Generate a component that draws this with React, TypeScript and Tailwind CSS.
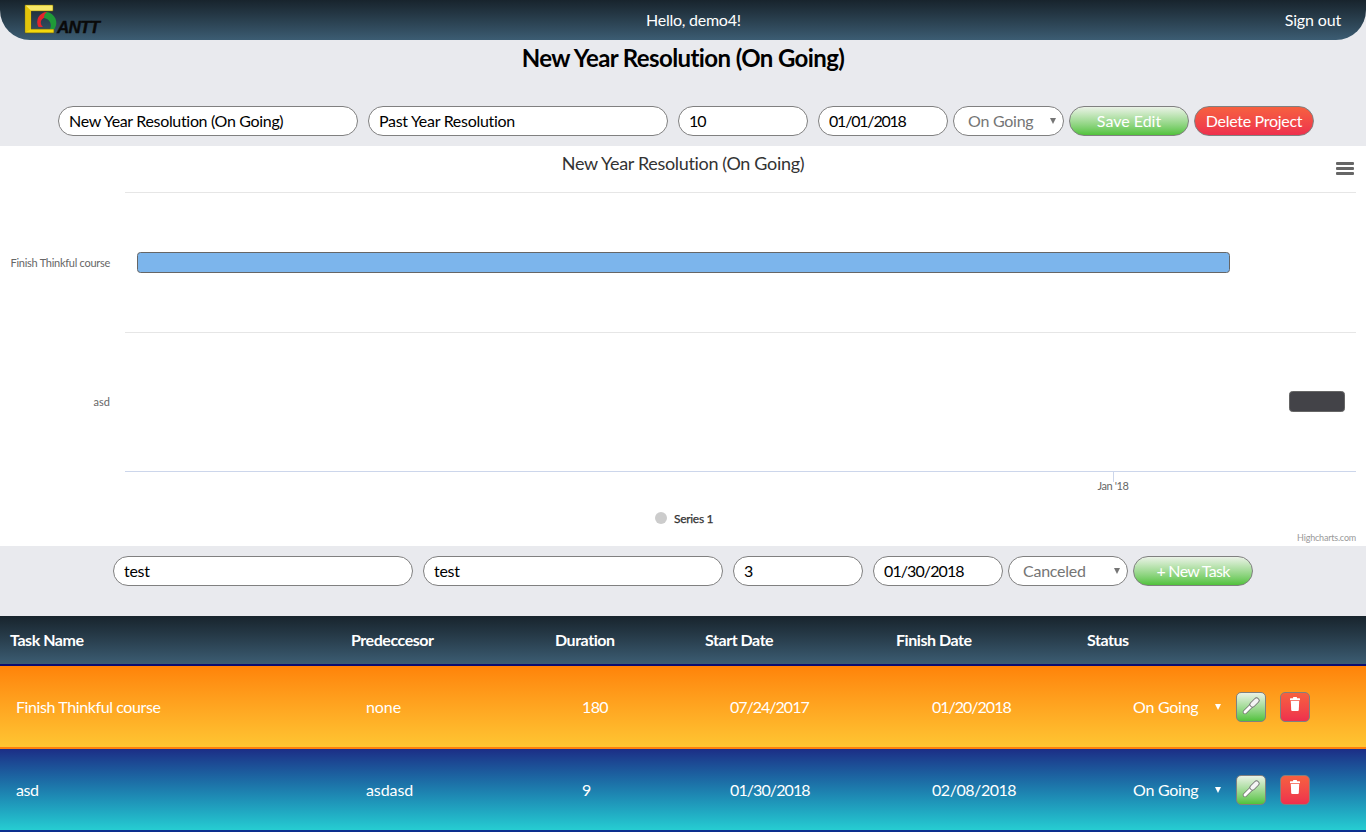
import React from "react";

const font = "font-['Lato','Open_Sans',sans-serif]";
const inputCls = `h-[30px] rounded-[15px] border border-[#808080] bg-white px-[10px] pb-[2px] text-[16px] text-black outline-none ${font}`;
const selectCls = `h-[30px] w-full appearance-none rounded-[15px] border border-[#808080] bg-white pl-[14px] text-[16px] tracking-[-0.25px] text-[#757575] outline-none ${font}`;
const greenBtn = `h-[30px] w-[120px] rounded-[15px] border border-[#808080] bg-gradient-to-b from-[#eaf2e6] to-[#50c23a] text-[16px] text-white ${font}`;
const redBtn = `h-[30px] w-[120px] rounded-[15px] border border-[#808080] bg-gradient-to-b from-[#f6603f] to-[#ee2f4d] text-[16px] text-white ${font}`;

function Logo() {
  return (
    <svg width="78" height="32" viewBox="0 0 78 32" className="block">
      <polygon points="1,1 29,1 29,7 7,7 7,25 30,25 30,29 1,29" fill="#f3d80c" stroke="#5d5a20" strokeWidth="0.7" />
      <polygon points="1.5,1.5 28.5,1.5 28.5,6.5 7,6.5" fill="#f7e96a" />
      <polygon points="1.5,1.5 7,7 7,25 1.5,28.5" fill="#e3c40a" />
      <path d="M23 8 A10 10 0 0 0 14.5 23 L19 23 A6 6 0 0 1 17 17 A5 5 0 0 1 24 14 L23 11 Z" fill="#e4252b" />
      <path d="M23 8 A11 11 0 0 1 30.5 25 L26 25 A7.5 7.5 0 0 0 20 14 A7 7 0 0 1 23 8 Z" fill="#1f9a38" />
      <text x="33" y="29" fontFamily="'Liberation Sans',sans-serif" fontSize="17" fontWeight="700" fontStyle="italic" fill="#0a0a0a" stroke="#0a0a0a" strokeWidth="0.4" textLength="43">ANTT</text>
    </svg>
  );
}

function Chart() {
  const f = "'Lato',sans-serif";
  return (
    <svg width="1366" height="400" viewBox="0 0 1366 400" className="block bg-white">
      <text x="683" y="24" textAnchor="middle" fontFamily={f} fontSize="18" letterSpacing="-0.33" fill="#333333">New Year Resolution (On Going)</text>
      <g fill="#666666">
        <rect x="1336" y="16" width="18" height="3" rx="1" />
        <rect x="1336" y="21" width="18" height="3" rx="1" />
        <rect x="1336" y="26" width="18" height="3" rx="1" />
      </g>
      <line x1="125" x2="1356" y1="46.5" y2="46.5" stroke="#e6e6e6" />
      <line x1="125" x2="1356" y1="186.5" y2="186.5" stroke="#e6e6e6" />
      <line x1="125" x2="1356" y1="325.5" y2="325.5" stroke="#ccd6eb" />
      <line x1="1113.5" x2="1113.5" y1="326" y2="336" stroke="#ccd6eb" />
      <text x="110" y="121" textAnchor="end" fontFamily={f} fontSize="11" letterSpacing="-0.27" fill="#666666">Finish Thinkful course</text>
      <text x="110" y="260" textAnchor="end" fontFamily={f} fontSize="11" fill="#666666">asd</text>
      <rect x="137.5" y="106.5" width="1092" height="20" rx="3" fill="#7cb5ec" stroke="#666666" />
      <rect x="1289.5" y="245.5" width="55" height="20" rx="3" fill="#434348" stroke="#666666" />
      <text x="1113" y="344" textAnchor="middle" fontFamily={f} fontSize="11" letterSpacing="-0.4" fill="#666666">Jan '18</text>
      <circle cx="661" cy="372" r="6" fill="#cccccc" />
      <text x="674" y="377" fontFamily={f} fontSize="12" letterSpacing="-0.3" stroke="#333333" strokeWidth="0.25" fill="#333333">Series 1</text>
      <text x="1356" y="395" textAnchor="end" fontFamily={f} fontSize="9" letterSpacing="-0.2" fill="#999999">Highcharts.com</text>
    </svg>
  );
}

function Wrench() {
  return (
    <svg width="18" height="18" viewBox="0 0 18 18" fill="none" className="mb-[2px]">
      <line x1="9" y1="9" x2="3" y2="15" stroke="#6f6f6f" strokeWidth="4.4" strokeLinecap="round" />
      <line x1="9" y1="9" x2="3" y2="15" stroke="#ffffff" strokeWidth="3" strokeLinecap="round" />
      <line x1="14.5" y1="3.5" x2="10.5" y2="7.5" stroke="#6f6f6f" strokeWidth="6" strokeLinecap="round" />
      <line x1="14.5" y1="3.5" x2="10.5" y2="7.5" stroke="#f4f4f4" strokeWidth="4.4" strokeLinecap="round" />
    </svg>
  );
}

function Trash() {
  return (
    <svg width="10" height="14" viewBox="0 0 10 14" fill="#ffffff" className="mb-[6px]">
      <rect x="3" y="0" width="4" height="2" rx="0.5" />
      <rect x="0" y="1.2" width="10" height="2" rx="0.5" />
      <path d="M0.8 4 H9.2 L8.8 13 Q8.7 14 7.8 14 H2.2 Q1.3 14 1.2 13 Z" />
    </svg>
  );
}

function FormCaret() {
  return (
    <svg width="6" height="6" viewBox="0 0 6 6" className="pointer-events-none absolute top-[12px] right-[8px]">
      <polygon points="0,0 6,0 3,6" fill="#757575" />
    </svg>
  );
}

function RowCaret() {
  return (
    <svg width="6" height="6" viewBox="0 0 6 6" className="pointer-events-none absolute top-[12px] right-[1px]">
      <polygon points="0,0 6,0 3,6" fill="#ffffff" />
    </svg>
  );
}

const gridCols = "grid grid-cols-[351px_204px_150px_191px_191px_1fr] items-center";

function Row({ name, pred, dur, start, end, cls, border, startT, endT }: { name: string; pred: string; dur: string; start: string; end: string; cls: string; border: string; startT: string; endT: string }) {
  return (
    <div className={`${gridCols} h-[83px] border-b-2 ${border} ${cls} text-[16px] text-white`}>
      <div className="pl-[16px] tracking-[-0.4px]">{name}</div>
      <div className="pl-[15px] tracking-[-0.1px]">{pred}</div>
      <div className="pl-[27px] tracking-[-0.6px]">{dur}</div>
      <div className={`pl-[25px] ${startT}`}>{start}</div>
      <div className={`pl-[36px] ${endT}`}>{end}</div>
      <div className="flex items-center pl-[46px]">
        <div className="relative h-[30px] w-[89px]">
          <select defaultValue="On Going" className={`h-[30px] w-full appearance-none bg-transparent text-[16px] tracking-[-0.25px] text-white outline-none ${font}`}>
            <option className="text-black">On Going</option>
          </select>
          <RowCaret />
        </div>
        <button className="ml-[14px] flex h-[30px] w-[30px] items-center justify-center rounded-[5px] border border-[#808080] bg-gradient-to-b from-[#eaf2e6] to-[#50c23a]"><Wrench /></button>
        <button className="ml-[14px] flex h-[30px] w-[30px] items-center justify-center rounded-[5px] border border-[#808080] bg-gradient-to-b from-[#f6603f] to-[#ee2f4d]"><Trash /></button>
      </div>
    </div>
  );
}

export default function App() {
  return (
    <div className={`h-[832px] w-[1366px] overflow-hidden bg-[#e9eaee] ${font}`}>
      <header className="grid h-[40px] grid-cols-[646px_1fr_auto] items-start rounded-b-[30px] bg-gradient-to-b from-[#18242d] to-[#3c5d73] text-[16px] text-white">
        <div className="pl-[24px] pt-[4px]"><Logo /></div>
        <div className="pt-[8px] tracking-[-0.25px]">Hello, demo4!</div>
        <div className="pr-[25px] pt-[8px] tracking-[-0.15px]">Sign out</div>
      </header>
      <h1 className="h-[66px] text-center text-[24px] leading-[36px] font-bold tracking-[-0.6px] text-black">New Year Resolution (On Going)</h1>
      <form className="flex h-[40px] items-start justify-center pl-[6px]">
        <input className={`${inputCls} w-[300px] tracking-[-0.33px]`} defaultValue="New Year Resolution (On Going)" />
        <input className={`${inputCls} ml-[10px] w-[300px] tracking-[-0.3px]`} defaultValue="Past Year Resolution" />
        <input className={`${inputCls} ml-[10px] w-[130px] tracking-[-1px]`} defaultValue="10" />
        <input className={`${inputCls} ml-[10px] w-[130px] tracking-[-1.2px]`} defaultValue="01/01/2018" />
        <div className="relative ml-[5px] h-[30px] w-[111px]">
          <select className={selectCls} defaultValue="On Going"><option>On Going</option></select>
          <FormCaret />
        </div>
        <button type="button" className={`${greenBtn} ml-[5px]`}>Save Edit</button>
        <button type="button" className={`${redBtn} ml-[5px] tracking-[-0.3px]`}>Delete Project</button>
      </form>
      <Chart />
      <form className="flex h-[70px] items-start justify-center pt-[10px]">
        <input className={`${inputCls} w-[300px] tracking-[-0.3px]`} defaultValue="test" />
        <input className={`${inputCls} ml-[10px] w-[300px] tracking-[-0.3px]`} defaultValue="test" />
        <input className={`${inputCls} ml-[10px] w-[130px]`} defaultValue="3" />
        <input className={`${inputCls} ml-[10px] w-[130px] tracking-[-0.9px]`} defaultValue="01/30/2018" />
        <div className="relative ml-[5px] h-[30px] w-[120px]">
          <select className={selectCls} defaultValue="Canceled"><option>Canceled</option></select>
          <FormCaret />
        </div>
        <button type="button" className={`${greenBtn} ml-[5px] tracking-[-0.7px]`}>+ New Task</button>
      </form>
      <div className={`${gridCols} h-[50px] border-b-2 border-[#0c0c6e] bg-gradient-to-b from-[#18242d] to-[#3c5d73] text-[16px] font-bold tracking-[-0.45px] text-white`}>
        <div className="pl-[10px]">Task Name</div>
        <div>Predeccesor</div>
        <div>Duration</div>
        <div>Start Date</div>
        <div>Finish Date</div>
        <div>Status</div>
      </div>
      <Row name="Finish Thinkful course" pred="none" dur="180" start="07/24/2017" end="01/20/2018" startT="tracking-[-1px]" endT="tracking-[-1px]" cls="bg-gradient-to-b from-[#ff8308] to-[#ffc532]" border="border-[#ff7f0e]" />
      <Row name="asd" pred="asdasd" dur="9" start="01/30/2018" end="02/08/2018" startT="tracking-[-0.9px]" endT="tracking-[-0.45px]" cls="bg-gradient-to-b from-[#1c2d86] to-[#26cdd2]" border="border-[#0c2f8e]" />
    </div>
  );
}
